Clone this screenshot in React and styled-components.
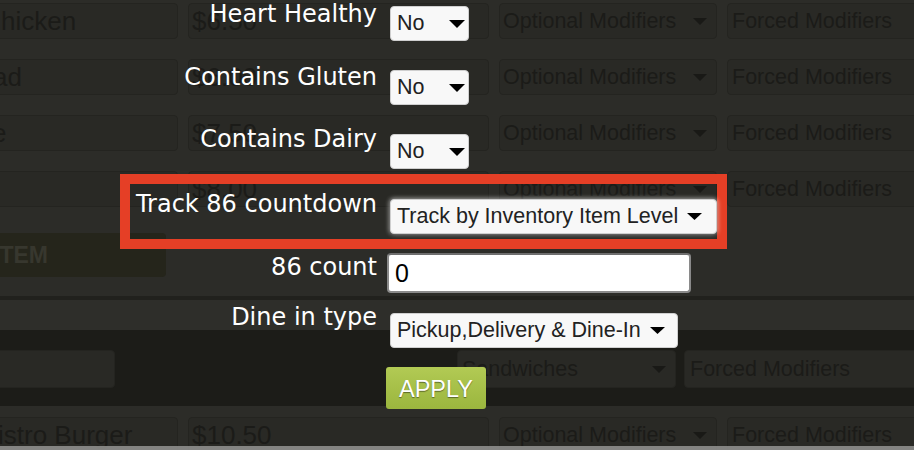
import React from "react";
import styled, { createGlobalStyle } from "styled-components";

const GlobalStyle = createGlobalStyle`
  html, body { margin: 0; padding: 0; background: #2c2c28; }
  body { width: 914px; height: 450px; overflow: hidden; font-family: "Liberation Sans", Arial, sans-serif; }
  * { box-sizing: border-box; }
`;

const Page = styled.div`
  position: relative;
  width: 914px;
  height: 450px;
  overflow: hidden;
  background: #2c2c28;
`;

/* ---------- dimmed background table ---------- */

const ItemRow = styled.div`
  display: grid;
  grid-template-columns: 200px 301px 218px 230px;
  column-gap: 10px;
  margin-left: -22px;
  height: ${(p) => p.$h || 56}px;
  padding-top: ${(p) => p.$pt || 3}px;
`;

const Field = styled.div`
  height: ${(p) => p.$h || 36}px;
  border: 1px solid #242420;
  border-radius: 4px;
  background: #292925;
  color: #1b1b18;
  font-size: ${(p) => p.$size || 26}px;
  display: flex;
  align-items: center;
  justify-content: space-between;
  padding-left: ${(p) => p.$pad ?? 3}px;
  padding-right: ${(p) => p.$padR ?? 9}px;
  white-space: nowrap;
  overflow: hidden;
  margin-left: ${(p) => p.$ml || 0}px;
  width: ${(p) => (p.$w ? `${p.$w}px` : "auto")};
  flex: none;
`;

const FieldText = styled.span`
  display: inline-block;
  margin-left: ${(p) => p.$shift || 0}px;
  padding-top: 1px;
`;

const ActionBar = styled.div`
  height: 72px;
  padding-top: 9px;
`;

const GhostButton = styled.div`
  width: 226px;
  height: 44px;
  margin-left: -60px;
  padding-left: 53px;
  border-radius: 4px;
  background: #25251b;
  color: #37372e;
  font-weight: 700;
  font-size: 23px;
  display: flex;
  align-items: center;
`;

const Divider = styled.div`
  height: 4px;
  background: #21211d;
`;

const Band = styled.div`
  height: 30px;
  background: #2e2e2a;
`;

const CategoryRow = styled.div`
  height: 76px;
  padding-top: 20px;
  background: #1c1c18;
  display: flex;
  gap: 8px;
  margin-left: -22px;
`;

const BottomFade = styled.div`
  position: absolute;
  left: 0;
  right: 0;
  bottom: 0;
  height: 4px;
  background: rgba(140, 140, 138, 0.92);
`;

const Arrow = ({ color = "#191916", w = 14, h = 7 }) => (
  <svg width={w} height={h} viewBox={`0 0 ${w} ${h}`} style={{ flex: "none" }}>
    <polygon points={`0,0 ${w},0 ${w / 2},${h}`} fill={color} />
  </svg>
);

/* ---------- form overlay ---------- */

const Form = styled.div`
  position: absolute;
  top: 0;
  left: 120px;
  width: 607px;
  display: flex;
  flex-direction: column;
`;

const FormRow = styled.div`
  display: grid;
  grid-template-columns: ${(p) => p.$labelW || 257}px auto;
  column-gap: 13px;
  align-items: start;
  justify-items: start;
  margin-top: ${(p) => p.$mt || 0}px;
`;

const Label = styled.div`
  justify-self: end;
  text-align: right;
  color: #ffffff;
  font-family: "DejaVu Sans", Verdana, sans-serif;
  font-size: 24px;
  line-height: 28px;
  white-space: nowrap;
`;

const Select = styled.div`
  width: ${(p) => p.$w}px;
  height: ${(p) => p.$h || 35}px;
  margin-top: ${(p) => p.$mt || 0}px;
  background: #f8f8f8;
  border: 1px solid #cfcfcf;
  border-radius: 4px;
  display: flex;
  align-items: center;
  justify-content: space-between;
  padding-left: 6px;
  padding-right: ${(p) => p.$padR || 12}px;
  color: #222;
  font-size: ${(p) => p.$size || 21.5}px;
  white-space: nowrap;
  box-shadow: ${(p) =>
    p.$glow
      ? "0 0 4px 1px rgba(255,255,255,0.55), 0 2px 3px rgba(0,0,0,0.55)"
      : "none"};
`;

const Highlight = styled.div`
  margin-top: 5px;
  border: 10px solid #e53f26;
  padding: 6px 0 5px 0;
`;

const CountInput = styled.div`
  width: 304px;
  height: 40px;
  margin-left: -3px;
  background: #fff;
  border: 2px solid #8a8a8a;
  border-top-color: #6e6e6e;
  border-radius: 4px;
  padding-left: 6px;
  display: flex;
  align-items: center;
  color: #000;
  font-size: 25px;
`;

const ApplyButton = styled.div`
  width: 100px;
  height: 42px;
  margin-left: -4px;
  border-radius: 3px;
  background: linear-gradient(#b2ca54, #9bb63e);
  color: #fff;
  font-size: 23.5px;
  display: flex;
  align-items: center;
  justify-content: center;
  padding-top: 2px;
  text-shadow: 0 1px 1px rgba(0, 0, 0, 0.45);
`;

const rows = [
  { name: "hicken", shift: 1, price: "$6.50" },
  { name: "ad", shift: -7, price: "$6.00" },
  { name: "e", shift: -8, price: "$7.50" },
  { name: "", shift: 0, price: "$8.00" },
];

export default function App() {
  return (
    <>
      <GlobalStyle />
      <Page>
        {rows.map((r, i) => (
          <ItemRow key={i}>
            <Field $pad={21}>
              <FieldText $shift={r.shift}>{r.name}</FieldText>
            </Field>
            <Field>
              <FieldText>{r.price}</FieldText>
            </Field>
            <Field $size={21.5}>
              <FieldText>Optional Modifiers</FieldText>
              <Arrow />
            </Field>
            <Field $size={21.5} $pad={4}>
              <FieldText>Forced Modifiers</FieldText>
            </Field>
          </ItemRow>
        ))}

        <ActionBar>
          <GhostButton>ITEM</GhostButton>
        </ActionBar>
        <Divider />
        <Band />
        <CategoryRow>
          <Field $h={38} $w={137} />
          <Field $h={38} $w={219} $ml={334} $size={21.5} $pad={4}>
            <FieldText>Sandwiches</FieldText>
            <Arrow />
          </Field>
          <Field $h={38} $w={240} $size={21.5} $pad={5}>
            <FieldText>Forced Modifiers</FieldText>
          </Field>
        </CategoryRow>
        <ItemRow $pt={11} $h={44}>
          <Field $pad={21}>
            <FieldText $shift={-2}>istro Burger</FieldText>
          </Field>
          <Field>
            <FieldText>$10.50</FieldText>
          </Field>
          <Field $size={21.5}>
            <FieldText>Optional Modifiers</FieldText>
            <Arrow />
          </Field>
          <Field $size={21.5} $pad={4}>
            <FieldText>Forced Modifiers</FieldText>
          </Field>
        </ItemRow>

        <BottomFade />

        <Form>
          <FormRow>
            <Label>Heart Healthy</Label>
            <Select $w={79} $mt={6} $padR={3}>
              No
              <Arrow color="#000" w={16} h={8} />
            </Select>
          </FormRow>
          <FormRow $mt={22}>
            <Label>Contains Gluten</Label>
            <Select $w={79} $mt={7} $padR={3}>
              No
              <Arrow color="#000" w={16} h={8} />
            </Select>
          </FormRow>
          <FormRow $mt={20}>
            <Label>Contains Dairy</Label>
            <Select $w={79} $mt={9} $padR={3}>
              No
              <Arrow color="#000" w={16} h={8} />
            </Select>
          </FormRow>
          <Highlight>
            <FormRow $labelW={247}>
              <Label>Track 86 countdown</Label>
              <Select $w={327} $mt={9} $padR={14} $glow>
                Track by Inventory Item Level
                <Arrow color="#000" w={15} h={7} />
              </Select>
            </FormRow>
          </Highlight>
          <FormRow $mt={4}>
            <Label>86 count</Label>
            <CountInput>0</CountInput>
          </FormRow>
          <FormRow $mt={10}>
            <Label>Dine in type</Label>
            <Select $w={288} $mt={10} $padR={12}>
              Pickup,Delivery &amp; Dine-In
              <Arrow color="#000" w={15} h={7} />
            </Select>
          </FormRow>
          <FormRow $mt={19}>
            <span />
            <ApplyButton>APPLY</ApplyButton>
          </FormRow>
        </Form>
      </Page>
    </>
  );
}
